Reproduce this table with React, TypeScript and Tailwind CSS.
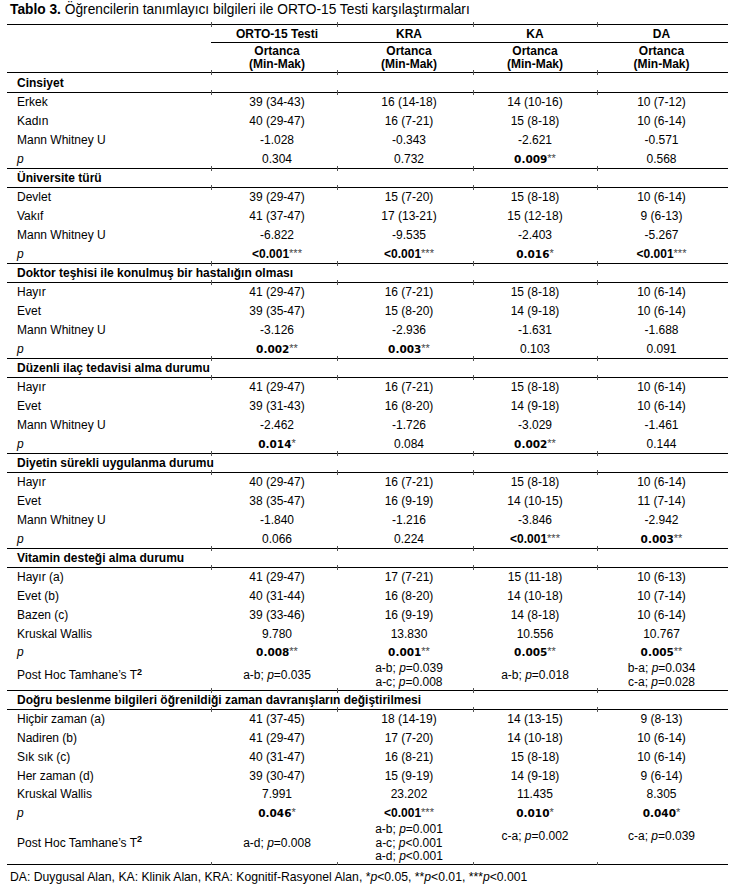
import React from 'react';

type Row = { label: string; italic?: boolean; cells: string[] };
type Section = { title: string; rows: Row[]; postHoc?: { cells: string[][]; h: string; shiftUp?: number[] } };

const sections: Section[] = [
  {
    title: 'Cinsiyet',
    rows: [
      { label: 'Erkek', cells: ['39 (34-43)', '16 (14-18)', '14 (10-16)', '10 (7-12)'] },
      { label: 'Kadın', cells: ['40 (29-47)', '16 (7-21)', '15 (8-18)', '10 (6-14)'] },
      { label: 'Mann Whitney U', cells: ['-1.028', '-0.343', '-2.621', '-0.571'] },
      { label: 'p', italic: true, cells: ['0.304', '0.732', '0.009**', '0.568'] },
    ],
  },
  {
    title: 'Üniversite türü',
    rows: [
      { label: 'Devlet', cells: ['39 (29-47)', '15 (7-20)', '15 (8-18)', '10 (6-14)'] },
      { label: 'Vakıf', cells: ['41 (37-47)', '17 (13-21)', '15 (12-18)', '9 (6-13)'] },
      { label: 'Mann Whitney U', cells: ['-6.822', '-9.535', '-2.403', '-5.267'] },
      { label: 'p', italic: true, cells: ['<0.001***', '<0.001***', '0.016*', '<0.001***'] },
    ],
  },
  {
    title: 'Doktor teşhisi ile konulmuş bir hastalığın olması',
    rows: [
      { label: 'Hayır', cells: ['41 (29-47)', '16 (7-21)', '15 (8-18)', '10 (6-14)'] },
      { label: 'Evet', cells: ['39 (35-47)', '15 (8-20)', '14 (9-18)', '10 (6-14)'] },
      { label: 'Mann Whitney U', cells: ['-3.126', '-2.936', '-1.631', '-1.688'] },
      { label: 'p', italic: true, cells: ['0.002**', '0.003**', '0.103', '0.091'] },
    ],
  },
  {
    title: 'Düzenli ilaç tedavisi alma durumu',
    rows: [
      { label: 'Hayır', cells: ['41 (29-47)', '16 (7-21)', '15 (8-18)', '10 (6-14)'] },
      { label: 'Evet', cells: ['39 (31-43)', '16 (8-20)', '14 (9-18)', '10 (6-14)'] },
      { label: 'Mann Whitney U', cells: ['-2.462', '-1.726', '-3.029', '-1.461'] },
      { label: 'p', italic: true, cells: ['0.014*', '0.084', '0.002**', '0.144'] },
    ],
  },
  {
    title: 'Diyetin sürekli uygulanma durumu',
    rows: [
      { label: 'Hayır', cells: ['40 (29-47)', '16 (7-21)', '15 (8-18)', '10 (6-14)'] },
      { label: 'Evet', cells: ['38 (35-47)', '16 (9-19)', '14 (10-15)', '11 (7-14)'] },
      { label: 'Mann Whitney U', cells: ['-1.840', '-1.216', '-3.846', '-2.942'] },
      { label: 'p', italic: true, cells: ['0.066', '0.224', '<0.001***', '0.003**'] },
    ],
  },
  {
    title: 'Vitamin desteği alma durumu',
    rows: [
      { label: 'Hayır (a)', cells: ['41 (29-47)', '17 (7-21)', '15 (11-18)', '10 (6-13)'] },
      { label: 'Evet (b)', cells: ['40 (31-44)', '16 (8-20)', '14 (10-18)', '10 (7-14)'] },
      { label: 'Bazen (c)', cells: ['39 (33-46)', '16 (9-19)', '14 (8-18)', '10 (6-14)'] },
      { label: 'Kruskal Wallis', cells: ['9.780', '13.830', '10.556', '10.767'] },
      { label: 'p', italic: true, cells: ['0.008**', '0.001**', '0.005**', '0.005**'] },
    ],
    postHoc: {
      h: 'h-[28.25px]',
      cells: [['a-b;=0.035'], ['a-b;=0.039', 'a-c;=0.008'], ['a-b;=0.018'], ['b-a;=0.034', 'c-a;=0.028']],
    },
  },
  {
    title: 'Doğru beslenme bilgileri öğrenildiği zaman davranışların değiştirilmesi',
    rows: [
      { label: 'Hiçbir zaman (a)', cells: ['41 (37-45)', '18 (14-19)', '14 (13-15)', '9 (8-13)'] },
      { label: 'Nadiren (b)', cells: ['41 (29-47)', '17 (7-20)', '14 (10-18)', '10 (6-14)'] },
      { label: 'Sık sık (c)', cells: ['40 (31-47)', '16 (8-21)', '15 (8-18)', '10 (6-14)'] },
      { label: 'Her zaman (d)', cells: ['39 (30-47)', '15 (9-19)', '14 (9-18)', '9 (6-14)'] },
      { label: 'Kruskal Wallis', cells: ['7.991', '23.202', '11.435', '8.305'] },
      { label: 'p', italic: true, cells: ['0.046*', '<0.001***', '0.010*', '0.040*'] },
    ],
    postHoc: {
      h: 'h-[41.5px]',
      cells: [['a-d;=0.008'], ['a-b;=0.001', 'a-c;<0.001', 'a-d;<0.001'], ['c-a;=0.002'], ['c-a;=0.039']],
      shiftUp: [2, 3],
    },
  },
];

const cols = ['w-[132px]', 'w-[132px]', 'w-[120px]', 'w-[133px]'];

// little column stubs that Word leaves where the rules cross the column edges
function Ticks() {
  return (
    <>
      <span className="absolute left-[204px] -top-[3px] w-px h-[5px] bg-[#555]" />
      <span className="absolute left-[330px] -top-[3px] w-px h-[5px] bg-[#555]" />
      <span className="absolute left-[466px] -top-[3px] w-px h-[5px] bg-[#555]" />
      <span className="absolute left-[590px] -top-[3px] w-px h-[5px] bg-[#555]" />
    </>
  );
}

function Value({ v }: { v: string }) {
  const stars = v.match(/\*+$/)?.[0] ?? '';
  const num = v.slice(0, v.length - stars.length);
  if (!stars) return <span>{num}</span>;
  const lt = num.startsWith('<');
  return (
    <span className="whitespace-nowrap">
      <span className={lt ? 'font-bold' : "font-bold font-['DejaVu_Sans'] text-[10.5px]"}>{num}</span>
      <span className="align-top text-[11px] leading-[12px] text-[#444]">{stars}</span>
    </span>
  );
}

// "a-b;=0.035" -> a-b; p=0.035 with italic p
function Pair({ s }: { s: string }) {
  const [a, b] = s.split(';');
  return (
    <div className="whitespace-nowrap">
      {a}; <i>p</i>
      {b}
    </div>
  );
}

function Cells({ cells }: { cells: string[] }) {
  return (
    <>
      {cells.map((c, i) => (
        <div key={i} className={`${cols[i]} flex items-center justify-center`}>
          <Value v={c} />
        </div>
      ))}
    </>
  );
}

function SectionBlock({ s }: { s: Section }) {
  return (
    <>
      <div className={`relative border-t border-black flex items-center pl-[10px] font-bold ${s.title === 'Cinsiyet' ? 'h-[20px]' : 'h-[19px]'}`}>
        <Ticks />
        {s.title}
      </div>
      <div className="relative border-t border-black">
        <Ticks />
        {s.rows.map((r, i) => (
          <div key={i} className="h-[18.75px] flex">
            <div className={`w-[204px] pl-[10px] flex items-center ${r.italic ? 'italic' : ''}`}>{r.label}</div>
            <Cells cells={r.cells} />
          </div>
        ))}
        {s.postHoc && (
          <div className={`${s.postHoc.h} flex leading-[13.5px]`}>
            <div className="w-[204px] pl-[10px] flex items-center">
              <span>
                Post Hoc Tamhane’s T<sup className="text-[9px] font-bold">2</sup>
              </span>
            </div>
            {s.postHoc.cells.map((lines, i) => (
              <div
                key={i}
                className={`${cols[i]} flex flex-col items-center justify-center ${s.postHoc?.shiftUp?.includes(i) ? 'pb-[13px]' : ''}`}
              >
                {lines.map((l, j) => (
                  <Pair key={j} s={l} />
                ))}
              </div>
            ))}
          </div>
        )}
      </div>
    </>
  );
}

export default function App() {
  return (
    <div className="w-[739px] h-[891px] bg-white text-black text-[12px] leading-[14px] font-['Liberation_Sans',Arial,sans-serif]">
      <div className="h-[24px] pl-[10px] pt-[2px] text-[13.75px] leading-[16px]">
        <b>Tablo 3.</b> Öğrencilerin tanımlayıcı bilgileri ile ORTO-15 Testi karşılaştırmaları
      </div>

      <div className="relative ml-[7px] w-[721px] border-b border-black">
        <div className="relative border-t border-black h-[19px] flex font-bold">
          <Ticks />
          <div className="w-[204px]" />
          <div className="flex border-b border-black">
            {['ORTO-15 Testi', 'KRA', 'KA', 'DA'].map((h, i) => (
              <div key={h} className={`${cols[i]} flex items-center justify-center`}>
                {h}
              </div>
            ))}
          </div>
        </div>
        <div className="h-[29px] flex font-bold leading-[13px]">
          <div className="w-[204px]" />
          {cols.map((c, i) => (
            <div key={i} className={`${c} flex flex-col items-center justify-center text-center`}>
              <div>Ortanca</div>
              <div>(Min-Mak)</div>
            </div>
          ))}
        </div>
        {sections.map((s) => (
          <SectionBlock key={s.title} s={s} />
        ))}
        <div className="relative">
          <span className="absolute left-[204px] -top-[2px] w-px h-[3px] bg-[#555]" />
          <span className="absolute left-[330px] -top-[2px] w-px h-[3px] bg-[#555]" />
          <span className="absolute left-[466px] -top-[2px] w-px h-[3px] bg-[#555]" />
          <span className="absolute left-[590px] -top-[2px] w-px h-[3px] bg-[#555]" />
        </div>
      </div>

      <div className="pl-[10px] pt-[4px] leading-[16px] text-[12.2px]">
        DA: Duygusal Alan, KA: Klinik Alan, KRA: Kognitif-Rasyonel Alan, *<i>p</i>&lt;0.05, **<i>p</i>&lt;0.01, ***<i>p</i>&lt;0.001
      </div>
    </div>
  );
}
